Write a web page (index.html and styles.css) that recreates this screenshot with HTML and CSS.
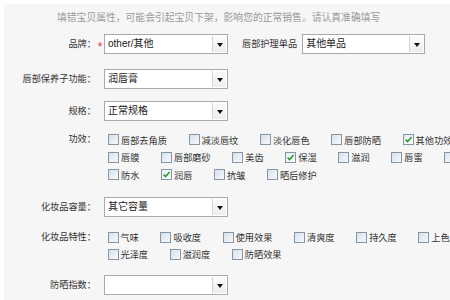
FILE: index.html
```html
<!DOCTYPE html>
<html lang="zh-CN">
<head>
<meta charset="utf-8">
<title>宝贝属性</title>
<link rel="stylesheet" href="styles.css">
</head>
<body>
<div class="panel">
  <p class="hint">填错宝贝属性，可能会引起宝贝下架，影响您的正常销售。请认真准确填写</p>

  <div class="row row-sel row-brand">
    <span class="label">品牌<span class="colon">：</span></span><span class="mark">*</span>
    <div class="select"><span class="val">other/其他</span><span class="btn"><i class="arrow"></i></span></div>
    <span class="label-inline">唇部护理单品</span>
    <div class="select select-b"><span class="val">其他单品</span><span class="btn"><i class="arrow"></i></span></div>
  </div>

  <div class="row row-sel row-gap12">
    <span class="label">唇部保养子功能<span class="colon">：</span></span><span class="mark"></span>
    <div class="select"><span class="val">润唇膏</span><span class="btn"><i class="arrow"></i></span></div>
  </div>

  <div class="row row-sel row-gap12">
    <span class="label">规格<span class="colon">：</span></span><span class="mark"></span>
    <div class="select"><span class="val">正常规格</span><span class="btn"><i class="arrow"></i></span></div>
  </div>

  <div class="row row-chk row-effect">
    <span class="label">功效<span class="colon">：</span></span><span class="mark"></span>
    <div class="checks">
      <div class="line">
        <span class="opt"><span class="box"></span>唇部去角质</span>
        <span class="opt"><span class="box"></span>减淡唇纹</span>
        <span class="opt"><span class="box"></span>淡化唇色</span>
        <span class="opt"><span class="box"></span>唇部防晒</span>
        <span class="opt"><span class="box on"><svg viewBox="0 0 9 9" width="9" height="9"><path d="M1.6 4.6 L3.6 6.6 L7.6 2" fill="none" stroke="#2f9a2f" stroke-width="1.6"/></svg></span>其他功效</span>
      </div>
      <div class="line">
        <span class="opt"><span class="box"></span>唇膜</span>
        <span class="opt"><span class="box"></span>唇部磨砂</span>
        <span class="opt"><span class="box"></span>美齿</span>
        <span class="opt"><span class="box on"><svg viewBox="0 0 9 9" width="9" height="9"><path d="M1.6 4.6 L3.6 6.6 L7.6 2" fill="none" stroke="#2f9a2f" stroke-width="1.6"/></svg></span>保湿</span>
        <span class="opt"><span class="box"></span>滋润</span>
        <span class="opt"><span class="box"></span>唇蜜</span>
        <span class="opt"><span class="box"></span></span>
      </div>
      <div class="line">
        <span class="opt"><span class="box"></span>防水</span>
        <span class="opt"><span class="box on"><svg viewBox="0 0 9 9" width="9" height="9"><path d="M1.6 4.6 L3.6 6.6 L7.6 2" fill="none" stroke="#2f9a2f" stroke-width="1.6"/></svg></span>润唇</span>
        <span class="opt"><span class="box"></span>抗皱</span>
        <span class="opt"><span class="box"></span>晒后修护</span>
      </div>
    </div>
  </div>

  <div class="row row-sel row-volume">
    <span class="label">化妆品容量<span class="colon">：</span></span><span class="mark"></span>
    <div class="select"><span class="val">其它容量</span><span class="btn"><i class="arrow"></i></span></div>
  </div>

  <div class="row row-chk2 row-trait">
    <span class="label">化妆品特性<span class="colon">：</span></span><span class="mark"></span>
    <div class="checks checks-b">
      <div class="line">
        <span class="opt"><span class="box"></span>气味</span>
        <span class="opt"><span class="box"></span>吸收度</span>
        <span class="opt"><span class="box"></span>使用效果</span>
        <span class="opt"><span class="box"></span>清爽度</span>
        <span class="opt"><span class="box"></span>持久度</span>
        <span class="opt"><span class="box"></span>上色度</span>
      </div>
      <div class="line">
        <span class="opt"><span class="box"></span>光泽度</span>
        <span class="opt"><span class="box"></span>滋润度</span>
        <span class="opt"><span class="box"></span>防晒效果</span>
      </div>
    </div>
  </div>

  <div class="row row-sel row-spf">
    <span class="label">防晒指数<span class="colon">：</span></span><span class="mark"></span>
    <div class="select"><span class="val"></span><span class="btn"><i class="arrow"></i></span></div>
  </div>
</div>
</body>
</html>
```

FILE: styles.css
```css
html, body {
  margin: 0;
  padding: 0;
  overflow: hidden;
  width: 450px;
  height: 300px;
  background: #ffffff;
  font-family: "Liberation Sans", "Noto Sans CJK SC", sans-serif;
  color: #333333;
}

.panel {
  margin: 4px 0 0 4px;
  padding-top: 8px;
  height: 296px;
  box-sizing: border-box;
  background: #f6f6f6;
}

.hint {
  margin: 0;
  padding-left: 53px;
  font-size: 9.8px;
  line-height: 12px;
  color: #9a9a9a;
  white-space: nowrap;
}

.row {
  display: flex;
  align-items: flex-start;
  white-space: nowrap;
}

.label {
  flex: 0 0 92px;
  text-align: right;
  font-size: 9.2px;
  color: #333333;
}

.colon {
  font-family: "Noto Sans CJK TC", "Noto Sans CJK SC", sans-serif;
  line-height: 0;
}

.mark {
  flex: 0 0 8px;
  text-align: center;
  font-size: 12px;
  color: #e0383b;
  line-height: 20px;
  padding-top: 3px;
  box-sizing: border-box;
}

.row-sel .label { line-height: 20px; }
.row-chk .label { line-height: 17.5px; }
.row-chk2 .label { line-height: 17px; }

.row-brand { margin-top: 10px; }
.row-gap12 { margin-top: 12px; }
.row-effect { margin-top: 10px; }
.row-volume { margin-top: 13.5px; }
.row-trait { margin-top: 11.5px; }
.row-spf { margin-top: 12.5px; }

.select {
  flex: 0 0 auto;
  width: 124px;
  height: 20px;
  box-sizing: border-box;
  border: 1px solid #a9a9a9;
  background: #ffffff;
  display: flex;
}

.select-b { width: 123px; }

.val {
  flex: 1;
  padding-left: 3px;
  font-size: 10px;
  line-height: 18px;
  color: #222222;
  overflow: hidden;
}

.btn {
  flex: 0 0 13px;
  margin: 1px 1px 1px 0;
  border-left: 1px solid #d2d2d2;
  background: linear-gradient(#fbfbfb, #ededed);
  display: flex;
  align-items: center;
  justify-content: center;
}

.arrow {
  display: block;
  width: 0;
  height: 0;
  border-left: 3.5px solid transparent;
  border-right: 3.5px solid transparent;
  border-top: 4px solid #111111;
  margin-top: 1px;
}

.label-inline {
  margin-left: 14px;
  margin-right: 5px;
  font-size: 9.2px;
  line-height: 20px;
  color: #333333;
}

.checks {
  display: flex;
  flex-direction: column;
  padding-left: 4px;
}

.checks-b { padding-left: 3.5px; }

.line {
  display: flex;
  align-items: center;
  height: 17.5px;
}

.checks-b .line { height: 17px; }

.opt {
  flex: 0 0 auto;
  display: inline-flex;
  align-items: center;
  margin-right: 21.6px;
  font-size: 9.2px;
  color: #333333;
}

.box {
  flex: 0 0 11px;
  width: 11px;
  height: 11px;
  box-sizing: border-box;
  margin-right: 2px;
  border: 1px solid #8496a8;
  background: linear-gradient(135deg, #d7e1ea, #f7f9fb);
  display: flex;
  align-items: center;
  justify-content: center;
}

.box.on {
  background: linear-gradient(135deg, #e6edf3, #ffffff);
}

.box svg { display: block; }
```
